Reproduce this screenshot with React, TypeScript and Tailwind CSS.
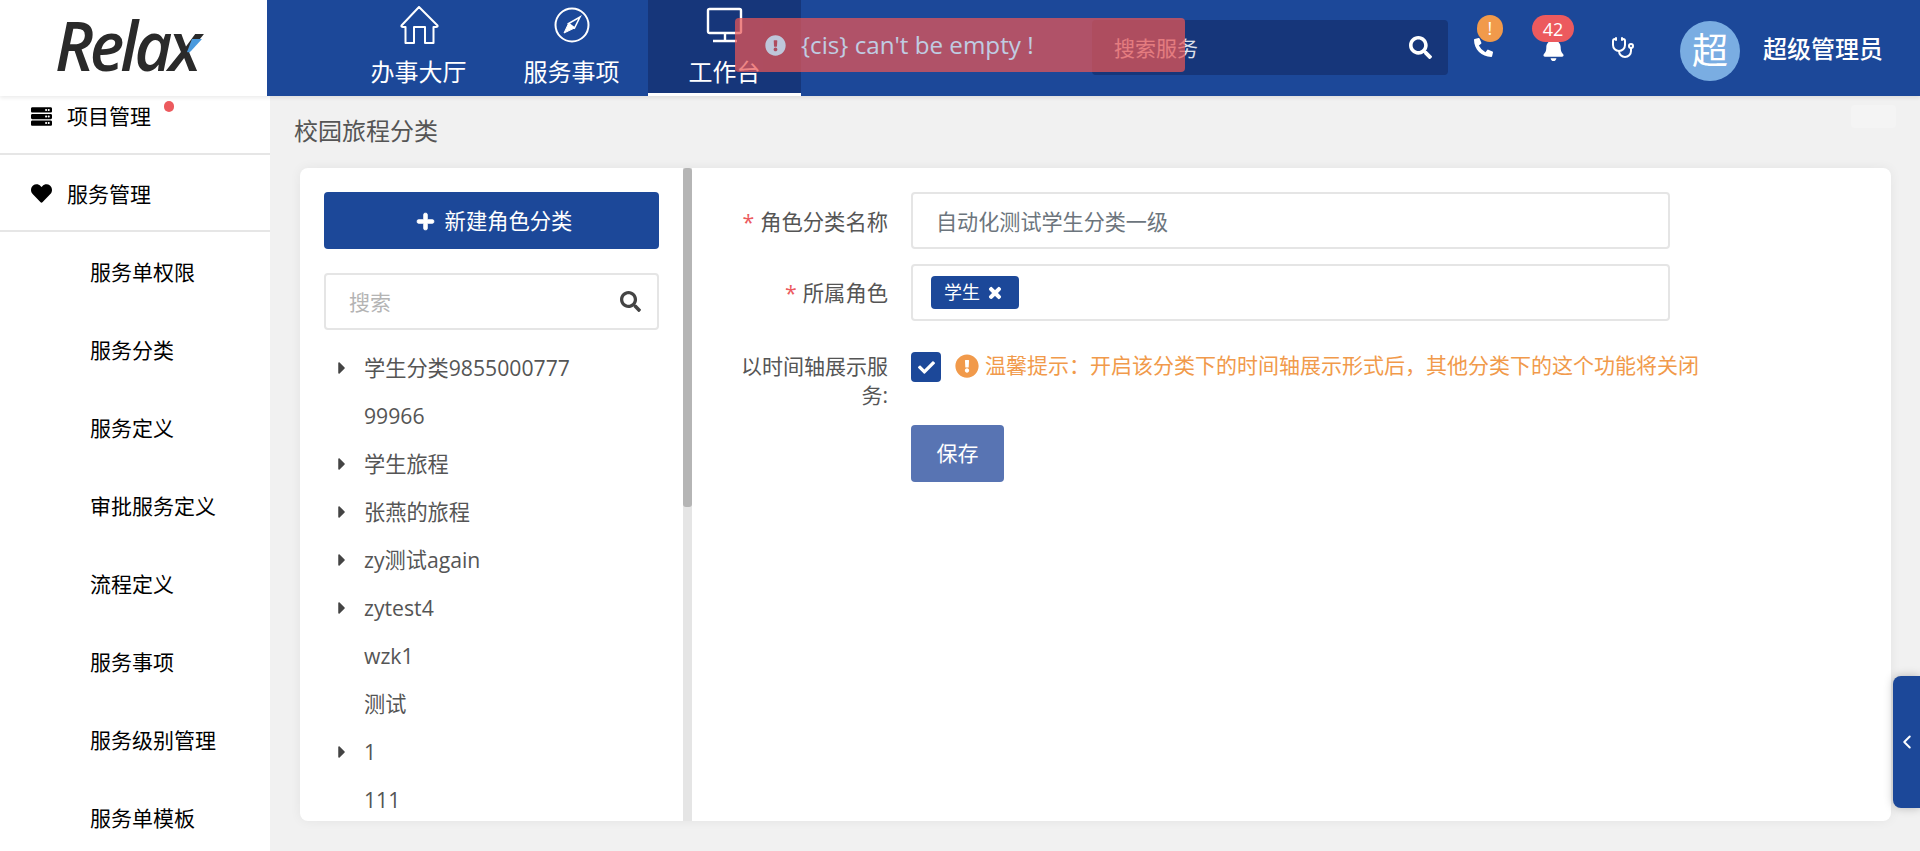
import React from "react";
import { FaHeart, FaServer, FaPlus, FaSearch, FaTimes, FaCheck, FaExclamationCircle, FaPhoneAlt, FaBell, FaCaretRight } from "react-icons/fa";
import { Stethoscope, ChevronLeft } from "lucide-react";

const HomeIcon = () => (
  <svg width="40" height="38" viewBox="0 0 40 38" fill="none" stroke="white" strokeWidth="2" strokeLinejoin="round">
    <path d="M20 1 L38.5 19.5 Q39 21 37 21 H34.5 V37 H26 V21 H15 V37 H6.5 V21 H4 Q2 21 2.5 19.5 Z" />
  </svg>
);
const CompassIcon = () => (
  <svg width="38" height="38" viewBox="0 0 38 38" fill="none" stroke="white" strokeWidth="2">
    <circle cx="19" cy="19" r="16.5" />
    <path d="M27 11 L21.5 22 L15.5 17.5 Z" strokeWidth="1.6" />
    <path d="M15.5 17.5 L21.5 22 L11 27 Z" fill="white" strokeWidth="1" />
  </svg>
);
const MonitorIcon = () => (
  <svg width="38" height="36" viewBox="0 0 38 36" fill="none" stroke="white" strokeWidth="2.4">
    <rect x="2" y="2" width="33" height="24" rx="1.5" />
    <path d="M19 26 V33 M7 34 H31" />
  </svg>
);

const subItems = ["服务单权限", "服务分类", "服务定义", "审批服务定义", "流程定义", "服务事项", "服务级别管理", "服务单模板"];
const tree: [string, boolean][] = [
  ["学生分类9855000777", true],
  ["99966", false],
  ["学生旅程", true],
  ["张燕的旅程", true],
  ["zy测试again", true],
  ["zytest4", true],
  ["wzk1", false],
  ["测试", false],
  ["1", true],
  ["111", false],
];

const NavItem = ({ icon, label, active }: { icon: React.ReactNode; label: string; active?: boolean }) => (
  <div className={`w-[153px] flex flex-col items-center pt-[5px] ${active ? "h-[96px] bg-[#16367a] border-b-[3px] border-white" : "h-[96px]"}`}>
    <div className="h-[40px] flex items-center justify-center">{icon}</div>
    <div className="text-[24px] leading-[32px] mt-[11px] text-white">{label}</div>
  </div>
);

export default function App() {
  return (
    <div
      className="relative w-[1920px] h-[851px] overflow-hidden bg-[#f1f1f1] flex flex-col text-[21px]"
      style={{ fontFamily: '"Open Sans","Noto Sans CJK SC",sans-serif' }}
    >
      <header className="relative z-10 h-[96px] flex shrink-0 bg-[#1c4899] shadow-[0_2px_4px_rgba(0,0,0,0.08)]">
        <div className="w-[267px] h-full bg-white flex items-center shrink-0 pl-[55px]">
          <div className="relative mb-[7px]">
            <span className="block origin-left scale-x-[.96] italic font-semibold text-[#2a2a2a] text-[68px] leading-[68px] tracking-[-4px] pr-[8px]">Relax</span>
            <svg width="16" height="14" viewBox="0 0 16 14" className="absolute left-[131px] top-[28px]"><path d="M6 0 H16 L5 12 Q3 14 1 13 Z" fill="#4a9ade" /></svg>
          </div>
        </div>
        <nav className="flex ml-[75px]">
          <NavItem icon={<HomeIcon />} label="办事大厅" />
          <NavItem icon={<CompassIcon />} label="服务事项" />
          <NavItem icon={<MonitorIcon />} label="工作台" active />
        </nav>
        <div className="ml-[291px] mt-[20px] w-[356px] h-[55px] bg-[#16367a] rounded-[4px] flex items-center pl-[22px] pr-[16px] justify-between">
          <span className="text-white/85 pt-[2px]">搜索服务</span>
          <FaSearch className="text-white text-[23px]" />
        </div>
        <div className="relative ml-[35px] w-[40px] h-full">
          <FaPhoneAlt className="absolute left-[-9px] top-[38px] text-white text-[19px]" />
          <span className="absolute left-[-6px] top-[15px] w-[26px] h-[27px] rounded-full bg-[#f19a4b] text-white text-[18px] flex items-center justify-center">!</span>
        </div>
        <div className="relative ml-[9px] w-[42px] h-full">
          <FaBell className="absolute left-[10px] top-[38px] text-white text-[23px]" />
          <span className="absolute left-0 top-[15px] w-[42px] h-[27px] rounded-full bg-[#ec5a5e] text-white text-[18px] leading-none flex items-center justify-center">42</span>
        </div>
        <Stethoscope className="ml-[37px] mt-[36px] text-white" size={24} strokeWidth={2} />
        <div className="ml-[45px] mt-[21px] w-[60px] h-[60px] rounded-full bg-[#7aade2] text-white text-[36px] flex items-center justify-center">超</div>
        <div className="ml-[23px] mt-[33px] text-[24px] leading-[32px] text-white font-medium">超级管理员</div>
      </header>

      <div className="flex flex-1 min-h-0">
        <aside className="w-[270px] shrink-0 bg-white overflow-hidden text-black">
          <div className="relative h-[59px] border-b-2 border-[#e6e6e6] flex items-start pl-[31px] pt-[6px]">
            <FaServer className="text-[21px] mt-[4px]" />
            <span className="ml-[15px] leading-[28px]">项目管理</span>
            <span className="absolute left-[164px] top-[5px] w-[10px] h-[11px] rounded-full bg-[#ec5a5e]" />
          </div>
          <div className="h-[77px] border-b-2 border-[#e6e6e6] flex items-center pl-[31px] pt-[2px]">
            <FaHeart className="text-[21px]" />
            <span className="ml-[15px] pt-[2px]">服务管理</span>
          </div>
          {subItems.map((s) => (
            <div key={s} className="h-[78px] flex items-center pl-[90px] pt-[4px]">{s}</div>
          ))}
        </aside>

        <main className="flex-1 min-w-0 pl-[24px] pr-[29px]">
          <div className="relative h-[72px] flex items-center text-[24px] text-[#555] pb-[2px]">
            校园旅程分类
            <span className="absolute right-[-5px] top-[9px] w-[45px] h-[23px] rounded-[4px] bg-[#f4f4f4]" />
          </div>
          <div className="ml-[6px] h-[653px] bg-white rounded-[8px] shadow-[0_0_12px_rgba(0,0,0,0.06)] flex overflow-hidden">
            <div className="relative w-[392px] shrink-0 pl-[24px] pr-[33px] pt-[24px] overflow-hidden">
              <button className="w-full h-[57px] rounded-[4px] bg-[#1c4899] text-white text-[21.3px] flex items-center justify-center gap-[10px] pt-[1px] pl-[5px]">
                <FaPlus className="text-[19px]" stroke="currentColor" strokeWidth={24} />
                新建角色分类
              </button>
              <div className="mt-[24px] h-[57px] rounded-[4px] border-2 border-[#e5e5e5] flex items-center justify-between pl-[23px] pr-[16px]">
                <span className="text-[#b4b4b4] pt-[3px]">搜索</span>
                <FaSearch className="text-[#444] text-[21px]" />
              </div>
              <div className="mt-[14px] text-[#555] text-[21.2px]">
                {tree.map(([t, arrow]) => (
                  <div key={t} className="h-[48px] flex items-center">
                    <span className="w-[40px] pl-[8px] text-[#444] flex items-center">{arrow && <FaCaretRight className="text-[20px]" />}</span>
                    {t}
                  </div>
                ))}
              </div>
              <div className="absolute right-0 top-0 bottom-0 w-[9px] bg-[#e5e5e5]">
                <div className="w-full h-[339px] rounded-[3px] bg-[#b5b5b5]" />
              </div>
            </div>
            <div className="flex-1 pt-[24px] text-[#555]">
              <div className="flex h-[57px] items-center text-[21.3px]">
                <label className="w-[196px] text-right pt-[2px]"><span className="text-[#ec5a5e] mr-[6px]">*</span>角色分类名称</label>
                <div className="ml-[23px] w-[759px] h-full rounded-[4px] border-2 border-[#e5e5e5] flex items-center pl-[23px] pt-[2px] text-[#6c757d] text-[21.1px]">自动化测试学生分类一级</div>
              </div>
              <div className="flex h-[57px] items-center mt-[15px]">
                <label className="w-[196px] text-right text-[21.3px]"><span className="text-[#ec5a5e] mr-[6px]">*</span>所属角色</label>
                <div className="ml-[23px] w-[759px] h-full rounded-[4px] border-2 border-[#e5e5e5] flex items-center pl-[18px]">
                  <span className="h-[33px] w-[88px] rounded-[4px] bg-[#1c4899] text-white text-[18px] flex items-center pl-[13px]">
                    学生
                    <FaTimes className="ml-[7px] text-[16px]" stroke="currentColor" strokeWidth={36} />
                  </span>
                </div>
              </div>
              <div className="flex mt-[31px]">
                <label className="w-[160px] ml-[36px] text-right leading-[29px]">以时间轴展示服务:</label>
                <div className="ml-[23px] flex items-start">
                  <span className="w-[30px] h-[30px] rounded-[4px] bg-[#1c4899] text-white flex items-center justify-center"><FaCheck className="text-[17px]" /></span>
                  <FaExclamationCircle className="ml-[14px] mt-[2px] text-[24px] text-[#f19a4b]" />
                  <span className="ml-[6px] text-[#f19a4b] leading-[30px] mt-[-2px]">温馨提示：开启该分类下的时间轴展示形式后，其他分类下的这个功能将关闭</span>
                </div>
              </div>
              <button className="ml-[219px] mt-[15px] w-[93px] h-[57px] rounded-[4px] bg-[#5874b3] text-white pt-[1px]">保存</button>
            </div>
          </div>
        </main>
      </div>

      <div className="absolute z-20 left-[735px] top-[18px] w-[450px] h-[54px] rounded-[4px] bg-[#e95656] opacity-[.72] text-white flex items-center pl-[30px]">
        <FaExclamationCircle className="text-[21px]" />
        <span className="ml-[15px] text-[24.2px] leading-none">{"{cis} can't be empty !"}</span>
      </div>
      <div className="absolute z-20 right-0 top-[676px] w-[27px] h-[132px] rounded-l-[8px] bg-[#1c4899] shadow-[0_0_10px_rgba(0,0,0,0.25)] flex items-center justify-center text-white">
        <ChevronLeft size={22} strokeWidth={2.2} />
      </div>
    </div>
  );
}
